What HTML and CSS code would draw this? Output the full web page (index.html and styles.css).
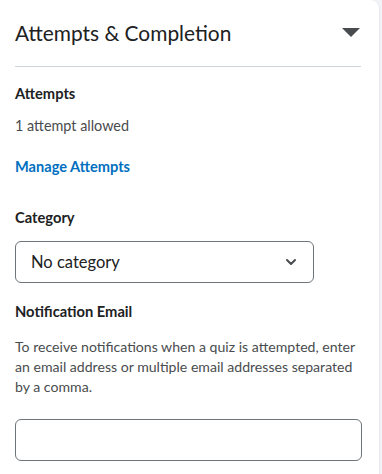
FILE: index.html
```html
<!DOCTYPE html>
<html lang="en">
  <head>
    <meta charset="UTF-8" />
    <title>Attempts &amp; Completion</title>
    <link rel="stylesheet" href="styles.css">
  </head>
  <body>
    <section class="panel">
      <header class="panel_head">
        <h2>Attempts &amp; Completion</h2>
        <span class="caret"></span>
      </header>

      <div class="field">
        <h3>Attempts</h3>
        <p class="info">1 attempt allowed</p>
        <a class="link" href="#">Manage Attempts</a>
      </div>

      <div class="field">
        <h3>Category</h3>
        <div class="select">
          <span>No category</span>
          <svg width="12" height="8" viewBox="0 0 12 8">
            <path d="M2 2 L6 6 L10 2" fill="none" stroke="#494c4e" stroke-width="2" stroke-linecap="round" stroke-linejoin="round" />
          </svg>
        </div>
      </div>

      <div class="field">
        <h3>Notification Email</h3>
        <p class="info help">
          To receive notifications when a quiz is attempted, enter an email
          address or multiple email addresses separated by a comma.
        </p>
        <div class="input"></div>
      </div>
    </section>
  </body>
</html>
```

FILE: styles.css
```css
body {
  margin: 0;
  padding: 0;
  background-color: #f1f3f6;
  font-family: Lato, "Noto Sans", sans-serif;
  color: #202122;
}

.panel {
  height: 474px;
  background-color: white;
  border-top-right-radius: 9px;
  border-right: 1px solid #e6eaf0;
  padding: 0 18px 0 15px;
  width: 346px;
}

.panel_head {
  display: flex;
  align-items: center;
  justify-content: space-between;
  height: 66px;
  border-bottom: 1px solid #cdd5dc;
}

.panel_head h2 {
  margin: 0;
  font-size: 20.9px;
  font-weight: 400;
  line-height: 24px;
  padding-bottom: 1px;
}

.caret {
  width: 0;
  height: 0;
  border-left: 9px solid transparent;
  border-right: 9px solid transparent;
  border-top: 9px solid #494c4e;
  margin-right: 1px;
  margin-bottom: 2px;
}

.field {
  padding-top: 18px;
}

h3 {
  margin: 0;
  font-size: 14.7px;
  font-weight: 700;
  line-height: 17px;
}

.info {
  margin: 14px 0 0;
  font-size: 14.4px;
  color: #494c4e;
  line-height: 20px;
}

.link {
  display: block;
  margin-top: 21px;
  font-size: 14.6px;
  font-weight: 700;
  color: #006fbf;
  text-decoration: none;
  line-height: 20px;
}

.field + .field {
  padding-top: 32px;
}

.field + .field + .field {
  padding-top: 20px;
}

.select {
  margin-top: 15px;
  width: 299px;
  height: 42px;
  box-sizing: border-box;
  border: 1px solid #6e7477;
  border-radius: 6px;
  display: flex;
  align-items: center;
  justify-content: space-between;
  padding: 0 16px 0 15px;
  font-size: 16.5px;
  color: #202122;
}

.help {
  margin-top: 17px;
  font-size: 14.1px;
}

.input {
  margin-top: 22px;
  width: 347px;
  height: 42px;
  box-sizing: border-box;
  border: 1px solid #6e7477;
  border-radius: 6px;
}
```
